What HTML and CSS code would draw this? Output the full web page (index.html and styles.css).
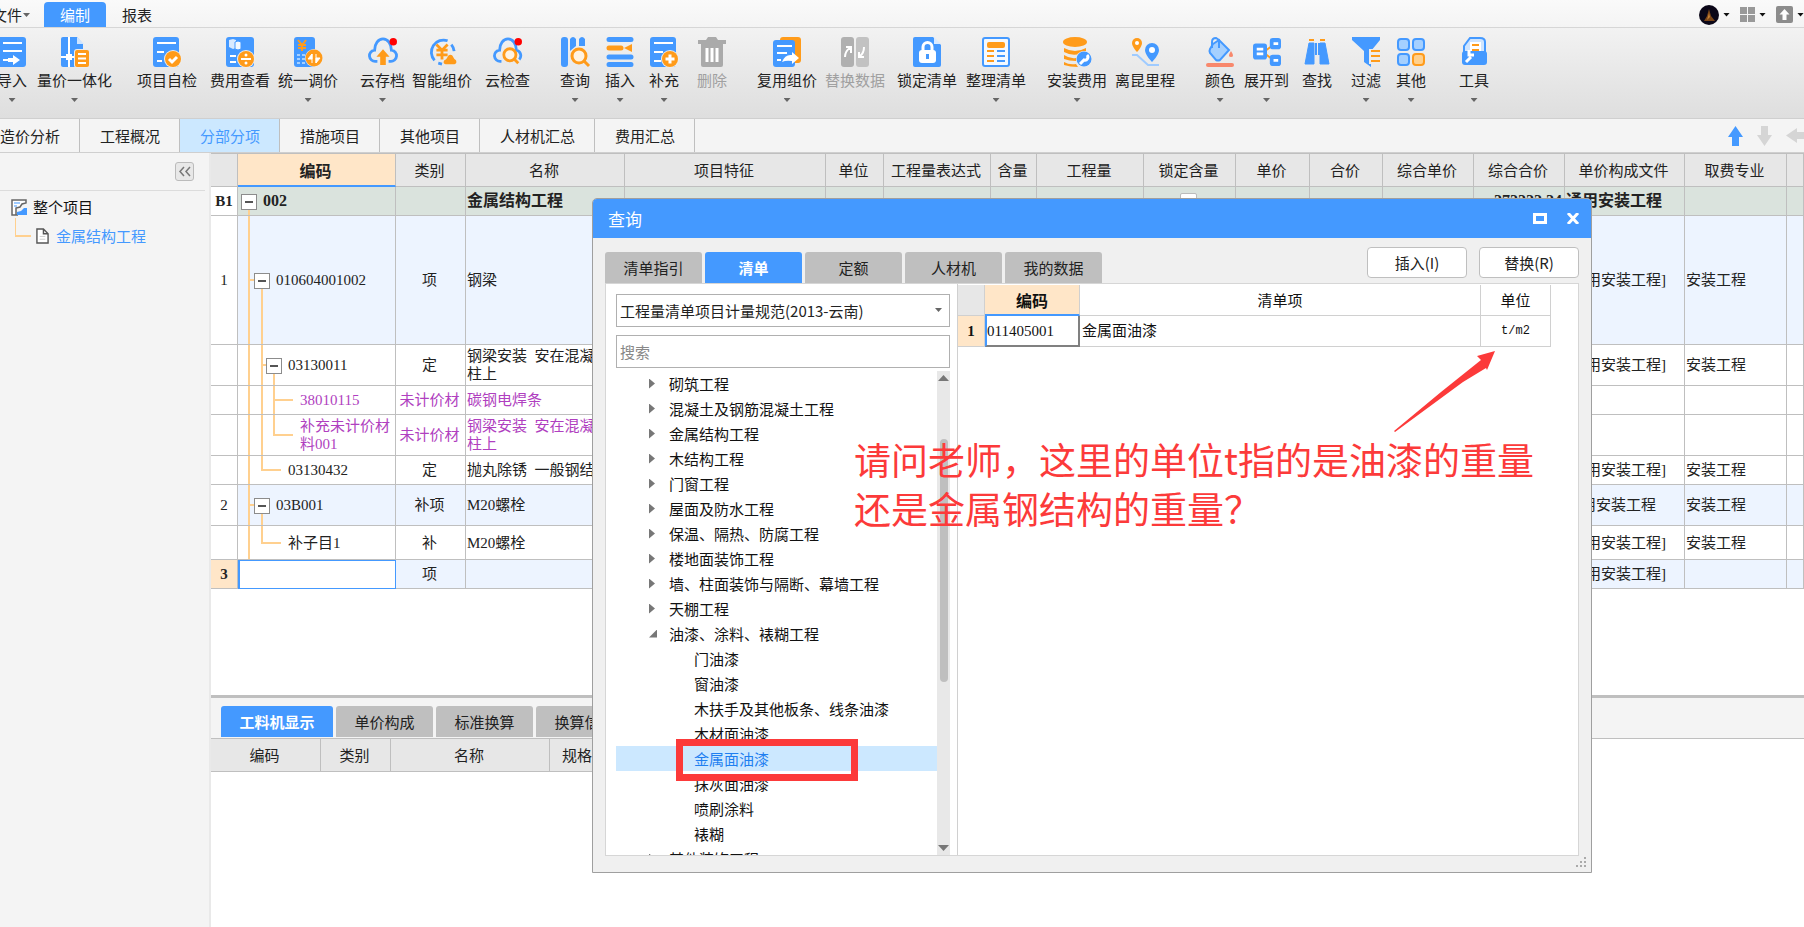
FILE: index.html
```html
<!DOCTYPE html>
<html lang="zh-CN">
<head>
<meta charset="utf-8">
<title>编制 - 分部分项</title>
<link rel="stylesheet" href="styles.css">
</head>
<body>
<div class="app">
  <header class="menubar">
    <button class="menu-file">文件<i class="caret"></i></button>
    <button class="menu-tab active">编制</button>
    <button class="menu-tab">报表</button>
    <div class="window-tools">
      <button aria-label="账户"><svg width="20" height="20" viewBox="0 0 20 20"><circle cx="10" cy="10" r="10" fill="#0b0718"/><path d="M10 4l2 7 4 5H5l3-5z" fill="#7a4518"/><path d="M10 8l1 4-3 3z" fill="#c98235"/></svg><i class="caret dark"></i></button>
      <button aria-label="布局"><svg width="15" height="15" viewBox="0 0 15 15" fill="#999"><path d="M0 0h7v7H0zM8 0h7v7H8zM0 8h7v7H0zM8 8h7v7H8z"/></svg><i class="caret dark"></i></button>
      <button aria-label="上传"><svg width="17" height="17" viewBox="0 0 17 17"><rect width="17" height="17" rx="2" fill="#8c8c8c"/><path d="M8.500 3l5 5.500h-3V14h-4V8.500h-3z" fill="#fff"/></svg><i class="caret dark"></i></button>
    </div>
  </header>

  <nav class="ribbon" aria-label="工具栏">
    <button class="tool"><svg viewBox="0 0 28 30"><rect width="28" height="30" rx="3" class="b"/><path d="M5 6h19M5 14h19M5 23h6" class="wl"/><path d="M10 21h5v-3l7 5-7 5v-3h-5z" class="w"/></svg>导入<i class="caret"></i></button>
    <button class="tool"><svg viewBox="0 0 28 30"><path d="M2 0h14l6 7v23H2a2 2 0 0 1-2-2V2a2 2 0 0 1 2-2z" class="b"/><path d="M16 0l7 7h-7z" fill="#cfe5ff"/><path d="M8 0v30M0 20h15" class="wl"/><rect x="5" y="17" width="6" height="6" class="w"/><rect x="13" y="12" width="16" height="19" rx="3" fill="#ececec"/><rect x="14" y="13" width="14" height="17" rx="2" class="o"/><path d="M17 17h8M17 21.500h8M17 26h8" class="wl"/></svg>量价一体化<i class="caret"></i></button>
    <button class="tool"><svg viewBox="0 0 28 30"><rect width="26" height="30" rx="3" class="b"/><path d="M4 6h19M4 15h7M4 24h5" class="wl"/><circle cx="20" cy="22" r="9" fill="#eee"/><circle cx="20" cy="22" r="8" class="o"/><path d="M16 22l3 3 5-5" class="wl3"/></svg>项目自检</button>
    <button class="tool"><svg viewBox="0 0 28 30"><rect width="28" height="30" rx="3" class="b"/><path d="M3 3l4-1 3 1v8l-3 1-4-2z" fill="#d9eaff"/><path d="M9 5l3-1 3 1v7l-3 1-3-1z" fill="#f2f8ff" stroke="#49f"/><path d="M4 19h6M4 25h6" class="wl"/><circle cx="20" cy="22" r="9" fill="#eee"/><circle cx="20" cy="22" r="8" class="o"/><path d="M15 22h10" class="wl"/><circle cx="20" cy="18" r="1.500" class="w"/><circle cx="20" cy="26" r="1.500" class="w"/></svg>费用查看</button>
    <button class="tool"><svg viewBox="0 0 28 30"><rect width="21" height="30" rx="3" class="b"/><path d="M4 3l4 5 4-5M8 8v6M4 8h8M4 11h8" class="ol"/><path d="M3 18h3M8 18h3M3 22h3M8 22h3M3 26h3M8 26h3" class="ll"/><circle cx="20" cy="21" r="9" fill="#eee"/><circle cx="20" cy="21" r="8.500" class="o"/><path d="M18 17v9M18 17l-4 5h4zM22 26v-9M22 26l4-5h-4z" fill="#fff" stroke="#fff"/></svg>统一调价<i class="caret"></i></button>
    <button class="tool"><svg viewBox="0 0 30 30"><path d="M9 25H7a6 6 0 0 1-1-12C6 6 10 1 15 1s9 5 9 12a6 6 0 0 1-1 12h-2" class="bl3"/><path d="M15 12l7 8h-4v9h-6v-9H8z" class="o"/><circle cx="26" cy="4" r="4" class="r"/></svg>云存档<i class="caret"></i></button>
    <button class="tool"><svg viewBox="0 0 30 30"><path d="M7 24A13 13 0 0 1 21 3M25 7a13 13 0 0 1 3 7M11 27l4 1" class="bl3"/><path d="M9 7l6 6 6-6M15 13v10M9 13h12M9 18h12" class="ol3"/><path d="M24 18c3 0 3 4 5 5 2 1 2 5-1 5h-9c-3 0-3-4 0-5 2-1 2-5 5-5z" class="o"/></svg>智能组价</button>
    <button class="tool"><svg viewBox="0 0 30 30"><path d="M8 25H7a6 6 0 0 1-1-12C6 6 10 1 15 1s9 5 9 12a6 6 0 0 1 3 10" class="bl3"/><circle cx="17" cy="18" r="6.500" fill="#fff3e2" class="ol3"/><path d="M21 22l5 5" class="ol3"/><circle cx="26" cy="4" r="4" class="r"/></svg>云检查</button>
    <button class="tool"><svg viewBox="0 0 28 30"><rect width="7" height="30" rx="3" class="b"/><path d="M9 2q3-4 6 0v7l-6 5zM18 2q3-4 6 0v7h-6z" class="b"/><circle cx="18" cy="19" r="7" fill="#fff3e2" class="ol3"/><path d="M23 24l5 5" class="ol3"/></svg>查询<i class="caret"></i></button>
    <button class="tool"><svg viewBox="0 0 28 30"><path d="M3 2.500h22M3 20h22M3 27.500h22" class="bl5"/><path d="M3 11h12" class="ol5"/><path d="M18 11l8-4v8z" class="o"/></svg>插入<i class="caret"></i></button>
    <button class="tool"><svg viewBox="0 0 28 30"><rect width="26" height="30" rx="3" class="b"/><path d="M4 6h19M4 15h9M4 24h7" class="wl"/><circle cx="20" cy="22" r="9" fill="#eee"/><circle cx="20" cy="22" r="8" class="o"/><path d="M15.500 22h9M20 17.500v9" class="wl3"/></svg>补充<i class="caret"></i></button>
    <button class="tool" disabled><svg viewBox="0 0 28 30" fill="#aaa"><path d="M0 3h8l2-3h8l2 3h8v4H0z"/><path d="M3 7h22v21a2 2 0 0 1-2 2H5a2 2 0 0 1-2-2z"/><path d="M9 11v14M14 11v14M19 11v14" class="wl3"/></svg>删除</button>
    <button class="tool"><svg viewBox="0 0 28 30"><rect x="7" width="21" height="26" rx="3" class="o"/><rect y="3" width="22" height="27" rx="3" class="b"/><path d="M4 9h15M4 16h10M4 23h4" class="wl"/><path d="M9 25q3-8 10-7v-3l7 6-7 6v-3q-6-1-10 1z" class="w"/></svg>复用组价<i class="caret"></i></button>
    <button class="tool" disabled><svg viewBox="0 0 28 30"><rect width="13" height="30" rx="3" fill="#b0b0b0"/><rect x="15" width="13" height="30" rx="3" fill="#c2c2c2"/><path d="M4 20q0-6 5-9M5 10l5 0v6M23 10q0 6-4 9M23 20h-5v-5" class="wl"/></svg>替换数据</button>
    <button class="tool"><svg viewBox="0 0 28 30"><path d="M2 0h18l8 8v20a2 2 0 0 1-2 2H2a2 2 0 0 1-2-2V2a2 2 0 0 1 2-2z" class="b"/><path d="M21 0l7 7h-7z" fill="#d9eaff"/><rect x="6" y="13" width="17" height="13" rx="3" class="w"/><path d="M10 14v-4a4 4 0 0 1 9 0v4" class="wl3"/><path d="M14.500 17v5" class="bl3"/></svg>锁定清单</button>
    <button class="tool"><svg viewBox="0 0 28 30"><rect x="1" y="1" width="26" height="28" rx="2" fill="#f4f9ff" stroke="#49f" stroke-width="2"/><rect x="5" y="5" width="18" height="6" rx="2" class="o"/><path d="M5 14h7M5 19h7M5 24h7" class="ol"/><path d="M15 14h8M15 19h8M15 24h8" class="bl"/></svg>整理清单<i class="caret"></i></button>
    <button class="tool"><svg viewBox="0 0 28 30"><ellipse cx="12" cy="5" rx="12" ry="5" class="o"/><path d="M1 11q11 6 22 0v3q-11 7-22 1zM1 18q6 4 12 3v3q-7 0-12-2zM1 25q5 3 12 2l2 3q-8 0-14-2z" class="o"/><circle cx="21" cy="22" r="8" fill="#eee"/><circle cx="21" cy="22" r="7.500" class="b"/><path d="M17 27l4-4a3 3 0 0 0 3-5" class="wl3"/></svg>安装费用<i class="caret"></i></button>
    <button class="tool"><svg viewBox="0 0 28 30"><path d="M6 1a5 5 0 0 1 5 5c0 4-5 9-5 9S1 10 1 6a5 5 0 0 1 5-5z" class="o"/><circle cx="6" cy="6" r="2" class="w"/><path d="M21 6a7 7 0 0 1 7 7c0 5-7 12-7 12s-7-7-7-12a7 7 0 0 1 7-7z" class="b"/><circle cx="21" cy="13" r="3" class="w"/><path d="M1 18h5l11 10h11" fill="none" stroke="#9fcbff" stroke-width="2"/></svg>离昆里程</button>
    <button class="tool"><svg viewBox="0 0 28 30"><path d="M7 7l6-4 10 10-9 10q-2 1-4 0l-6-7q-1-2 0-4z" fill="#a5d0ff" class="bl"/><path d="M6 11V5q0-4 4-4l3 2v8" fill="none" class="bl"/><path d="M25 14q4 6 0 6t0-6z" fill="#f8886c"/><path d="M2 28h24" stroke="#f8886c" stroke-width="4" stroke-linecap="round"/></svg>颜色<i class="caret"></i></button>
    <button class="tool"><svg viewBox="0 0 30 30"><path d="M13 14l8-6M13 17l8 6" class="ol"/><rect y="6" width="15" height="17" rx="3" class="b"/><rect x="18" width="12" height="12" rx="3" class="b"/><rect x="18" y="18" width="12" height="12" rx="3" class="b"/><path d="M4 12h7M4 17h7M22 6h5M22 24h5" class="wl3"/></svg>展开到<i class="caret"></i></button>
    <button class="tool"><svg viewBox="0 0 28 30"><path d="M6 6h5v21H2zM17 6h5l4 21h-9z" class="b" stroke="#49f"/><path d="M13 6v12M16 6v12" class="bl"/><path d="M6 3h5M17 3h5" class="ol"/></svg>查找</button>
    <button class="tool"><svg viewBox="0 0 28 30"><path d="M0 0h28v3l-9 11v16l-7-5V14L0 3z" class="b"/><rect x="17" y="12" width="11" height="15" fill="#ececec"/><path d="M19 14h9M19 19h9M19 24h9" class="ol"/></svg>过滤<i class="caret"></i></button>
    <button class="tool"><svg viewBox="0 0 28 30"><g fill="#a5d0ff" class="bl"><rect x="1" y="2" width="11" height="11" rx="3"/><rect x="16" y="2" width="11" height="11" rx="3"/><rect x="1" y="17" width="11" height="11" rx="3"/></g><rect x="16" y="17" width="11" height="11" rx="3" fill="#ffd08c" class="ol"/></svg>其他<i class="caret"></i></button>
    <button class="tool"><svg viewBox="0 0 28 30"><path d="M4 15V9l6-8h10q5 0 5 4v10z" fill="#cfe5ff" stroke="#49f" stroke-width="2"/><path d="M10 5h11v11H10z" class="w"/><path d="M12 8h7M12 13h7" class="ol"/><rect x="2" y="14" width="25" height="14" rx="3" class="b"/><path d="M6 25l5-5M9 13v5h5" class="wl3"/></svg>工具<i class="caret"></i></button>
  </nav>

  <nav class="page-tabs">
    <button>造价分析</button><button>工程概况</button><button class="active">分部分项</button><button>措施项目</button><button>其他项目</button><button>人材机汇总</button><button>费用汇总</button>
    <div class="move-tools">
      <button aria-label="上移"><svg width="15" height="20" viewBox="0 0 15 20" fill="#49f"><path d="M7.500 0L15 11h-4v9H4v-9H0z"/></svg></button>
      <button aria-label="下移"><svg width="15" height="20" viewBox="0 0 15 20" fill="#d5d5d5"><path d="M7.500 20L15 9h-4V0H4v9H0z"/></svg></button>
      <button aria-label="左移"><svg width="20" height="15" viewBox="0 0 20 15" fill="#d5d5d5"><path d="M0 7.500L11 0v4h9v7h-9v4z"/></svg></button>
    </div>
  </nav>

  <div class="workspace">
    <aside class="sidebar">
      <div class="side-head"><button class="collapse" aria-label="收起"><svg width="13" height="11" viewBox="0 0 13 11"><path d="M6 1L2 5.500 6 10M12 1L8 5.500l4 4.500" fill="none" stroke="#777" stroke-width="1.500"/></svg></button></div>
      <div class="project-root"><svg width="17" height="17" viewBox="0 0 17 17"><path d="M7 16H1V1h14v3l-4 1-2 3-4 1v7" fill="#fff" stroke="#666" stroke-width="1.500"/><path d="M3 4h6M3 7h3" stroke="#9fcbff" stroke-width="2"/><path d="M6 16v-3l4-1 3-3h3v7z" fill="#49f"/></svg>整个项目</div>
      <div class="project-child"><svg width="16" height="20" viewBox="0 0 16 20"><path d="M0 0v18h16" fill="none" stroke="#ffd08f" stroke-width="2"/></svg><svg width="13" height="16" viewBox="0 0 14 17"><path d="M1 1h7l5 5v10H1zM8 1v5h5" fill="#fff" stroke="#555" stroke-width="1.500"/><path d="M4 9h6M4 12h6" stroke="#ccc"/></svg><a href="#">金属结构工程</a></div>
    </aside>

    <main class="content">
      <section class="grid-area">
        <table class="grid">
          <colgroup><col class="c27"><col class="c158"><col class="c70"><col class="c159"><col class="c201"><col class="c58"><col class="c107"><col class="c46"><col class="c107"><col class="c92"><col class="c74"><col class="c73"><col class="c91"><col class="c91"><col class="c120"><col class="c102"><col></colgroup>
          <thead><tr><th></th><th class="current">编码</th><th>类别</th><th>名称</th><th>项目特征</th><th>单位</th><th>工程量表达式</th><th>含量</th><th>工程量</th><th>锁定含量</th><th>单价</th><th>合价</th><th>综合单价</th><th>综合合价</th><th>单价构成文件</th><th>取费专业</th><th></th></tr></thead>
          <tbody>
            <tr class="section h29"><td class="no">B1</td><td class="code g-root"><button class="toggle" aria-label="折叠"></button>002</td><td></td><td>金属结构工程</td><td></td><td></td><td></td><td></td><td></td><td class="mid"><input type="checkbox" class="lock" aria-label="锁定含量"></td><td></td><td></td><td></td><td class="num">272222.24</td><td>通用安装工程</td><td></td><td></td></tr>
            <tr class="item h129"><td class="no">1</td><td class="code g-item lv1"><button class="toggle" aria-label="折叠"></button>010604001002</td><td class="mid">项</td><td>钢梁</td><td></td><td></td><td></td><td></td><td></td><td></td><td></td><td></td><td></td><td></td><td>[通用安装工程]</td><td>安装工程</td><td></td></tr>
            <tr class="h41"><td class="no"></td><td class="code g-sub lv2"><button class="toggle" aria-label="折叠"></button>03130011</td><td class="mid">定</td><td>钢梁安装&ensp;安在混凝土<br>柱上</td><td></td><td></td><td></td><td></td><td></td><td></td><td></td><td></td><td></td><td></td><td>[通用安装工程]</td><td>安装工程</td><td></td></tr>
            <tr class="material h29"><td class="no"></td><td class="code g-leaf text3">38010115</td><td class="mid">未计价材</td><td>碳钢电焊条</td><td></td><td></td><td></td><td></td><td></td><td></td><td></td><td></td><td></td><td></td><td></td><td></td><td></td></tr>
            <tr class="material h41"><td class="no"></td><td class="code g-leaf-end text3">补充未计价材<br>料001</td><td class="mid">未计价材</td><td>钢梁安装&ensp;安在混凝土<br>柱上</td><td></td><td></td><td></td><td></td><td></td><td></td><td></td><td></td><td></td><td></td><td></td><td></td><td></td></tr>
            <tr class="h29"><td class="no"></td><td class="code g-sub-end text2">03130432</td><td class="mid">定</td><td>抛丸除锈&ensp;一般钢结构</td><td></td><td></td><td></td><td></td><td></td><td></td><td></td><td></td><td></td><td></td><td>[通用安装工程]</td><td>安装工程</td><td></td></tr>
            <tr class="item h41"><td class="no">2</td><td class="code g-item lv1"><button class="toggle" aria-label="折叠"></button>03B001</td><td class="mid">补项</td><td>M20螺栓</td><td></td><td></td><td></td><td></td><td></td><td></td><td></td><td></td><td></td><td></td><td>通用安装工程</td><td>安装工程</td><td></td></tr>
            <tr class="h34"><td class="no"></td><td class="code g-sub-end text2">补子目1</td><td class="mid">补</td><td>M20螺栓</td><td></td><td></td><td></td><td></td><td></td><td></td><td></td><td></td><td></td><td></td><td>[通用安装工程]</td><td>安装工程</td><td></td></tr>
            <tr class="item h29"><td class="no picked">3</td><td class="code editing"></td><td class="mid">项</td><td></td><td></td><td></td><td></td><td></td><td></td><td></td><td></td><td></td><td></td><td></td><td>[通用安装工程]</td><td></td><td></td></tr>
          </tbody>
        </table>
      </section>
      <section class="detail">
        <nav class="sub-tabs"><button class="active">工料机显示</button><button>单价构成</button><button>标准换算</button><button>换算信息</button></nav>
        <table class="grid detail-grid"><thead><tr><th class="c110">编码</th><th class="c70">类别</th><th class="c159">名称</th><th class="c102">规格及型号</th></tr></thead></table>
      </section>
    </main>
  </div>

  <div class="dialog" role="dialog" aria-labelledby="dlg-title">
    <div class="dlg-title"><span id="dlg-title">查询</span>
      <button aria-label="最大化"><svg width="14" height="11" viewBox="0 0 14 11"><rect x="1.500" y="1.500" width="11" height="8" fill="none" stroke="#fff" stroke-width="3"/></svg></button>
      <button aria-label="关闭"><svg width="14" height="11" viewBox="0 0 14 11"><path d="M2 0l10 11M12 0L2 11" stroke="#fff" stroke-width="3"/></svg></button>
    </div>
    <div class="dlg-bar">
      <nav class="sub-tabs"><button>清单指引</button><button class="active">清单</button><button>定额</button><button>人材机</button><button>我的数据</button></nav>
      <div class="actions"><button>插入(I)</button><button>替换(R)</button></div>
    </div>
    <div class="dlg-body">
      <div class="picker">
        <div class="select-wrap"><select aria-label="清单规范"><option>工程量清单项目计量规范(2013-云南)</option></select><i class="caret"></i></div>
        <input class="search" type="text" placeholder="搜索" aria-label="搜索">
        <div class="tree-box">
          <ul class="tree">
            <li>砌筑工程</li><li>混凝土及钢筋混凝土工程</li><li>金属结构工程</li><li>木结构工程</li><li>门窗工程</li><li>屋面及防水工程</li><li>保温、隔热、防腐工程</li><li>楼地面装饰工程</li><li>墙、柱面装饰与隔断、幕墙工程</li><li>天棚工程</li><li class="open">油漆、涂料、裱糊工程</li>
            <li class="leaf">门油漆</li><li class="leaf">窗油漆</li><li class="leaf">木扶手及其他板条、线条油漆</li><li class="leaf">木材面油漆</li><li class="leaf selected">金属面油漆</li><li class="leaf">抹灰面油漆</li><li class="leaf">喷刷涂料</li><li class="leaf">裱糊</li><li>其他装饰工程</li>
          </ul>
          <div class="scrollbar"><i class="up"></i><i class="thumb"></i><i class="down"></i></div>
        </div>
      </div>
      <div class="results">
        <table class="result-grid">
          <colgroup><col class="c27"><col class="c95"><col><col class="c70"></colgroup>
          <thead><tr><th class="corner"></th><th class="current">编码</th><th>清单项</th><th>单位</th></tr></thead>
          <tbody><tr><td class="no picked">1</td><td class="focus">011405001</td><td>金属面油漆</td><td class="mid">t/m2</td></tr></tbody>
        </table>
      </div>
    </div>
    <svg class="grip" width="11" height="11" viewBox="0 0 11 11" fill="#aaa"><path d="M8 0h2v2H8zM4 4h2v2H4zM8 4h2v2H8zM0 8h2v2H0zM4 8h2v2H4zM8 8h2v2H8z"/></svg>
    <div class="mark-box"></div>
    <p class="question">请问老师，这里的单位t指的是油漆的重量<br>还是金属钢结构的重量？</p>
    <svg class="mark-arrow" width="102" height="82" viewBox="0 0 102 82"><path d="M101 0L83 5l4 4-40 32L0 80l1 1 68-50 23-14 1 2z" fill="#fc3a3a"/></svg>
  </div>
</div>
</body>
</html>
```
FILE: styles.css
```css
* { box-sizing: border-box; }
html, body { height: 100%; }
body {
  margin: 0;
  overflow: hidden;
  font: 15px/20px "Noto Sans CJK SC", sans-serif;
  color: #222;
  background: #fff;
}
button {
  border: 0;
  padding: 0;
  background: none;
  font: inherit;
  color: inherit;
  white-space: nowrap;
}
svg { display: block; flex: none; }

.app {
  position: relative;
  height: 100%;
  display: flex;
  flex-direction: column;
  overflow: hidden;
}
.caret {
  display: block;
  width: 7px;
  height: 4px;
  background: #666;
  clip-path: polygon(0 0, 100% 0, 50% 100%);
}
.caret.dark { background: #111; }

/* menu bar */
.menubar {
  flex: none;
  height: 28px;
  display: flex;
  align-items: flex-end;
  background: linear-gradient(#fafafa, #f4f4f4);
  border-bottom: 1px solid #d6d6d6;
}
.menu-file {
  display: flex;
  align-items: center;
  gap: 1px;
  margin-left: -8px;
  height: 24px;
}
.menu-tab { width: 62px; height: 25px; border-radius: 4px 4px 0 0; }
.menu-tab.active { margin-left: 14px; background: #49f; color: #fff; }
.window-tools {
  display: flex;
  gap: 10px;
  height: 25px;
  margin-left: auto;
}
.window-tools button { display: flex; align-items: center; gap: 4px; }

/* ribbon */
.ribbon {
  flex: none;
  height: 91px;
  padding-top: 9px;
  margin-left: -3px;
  display: grid;
  grid-template-columns: 40px 100px 73px 68px 82px 52px 73px 75px 45px 44px 48px 60px 68px 72px 69px 81px 68px 90px 39px 58px 49px 45px 63px 30px;
  justify-items: start;
  align-items: start;
  background: linear-gradient(#f2f2f2, #dedede);
  border-bottom: 1px solid #cfcfcf;
}
.tool { display: flex; flex-direction: column; align-items: center; line-height: 24px; }
.tool svg { width: 28px; height: 30px; margin-bottom: 1px; overflow: visible; }
.tool .caret { margin-top: 6px; }
.tool:disabled { color: #a0a0a0; }
.b { fill: #49f; }
.o { fill: #ff9b1a; }
.w { fill: #fff; }
.r { fill: #f00; }
.wl, .wl3, .ll, .bl3, .bl5, .ol, .ol3, .ol5, .bl { stroke-width: 2; }
.wl, .wl3, .ll, .ol5, .bl5, .bl3, path.ol, path.ol3 { fill: none; }
.wl, .wl3 { stroke: #fff; }
.ll { stroke: #a5d0ff; }
.bl, .bl3, .bl5 { stroke: #49f; }
.ol, .ol3, .ol5 { stroke: #ff9b1a; }
.wl3, .bl3, .ol3 { stroke-width: 3; }
.bl5, .ol5 { stroke-width: 5; stroke-linecap: round; }

/* page tabs */
.page-tabs {
  flex: none;
  height: 34px;
  display: flex;
  margin-left: -20px;
  background: #f4f4f4;
  border-bottom: 1px solid #cfcfcf;
}
.page-tabs > button { padding: 0 19px 0 20px; border-right: 1px solid #bfbfbf; }
.page-tabs > .active { background: #cce8ff; color: #49f; }
.move-tools { margin: 0 -2px 0 auto; display: flex; align-items: center; gap: 14px; }

.workspace { flex: 1; min-height: 0; display: flex; }

/* project tree */
.sidebar {
  flex: none;
  width: 211px;
  background: #f4f4f4;
  border-right: 2px solid #e9e9e9;
}
.side-head {
  height: 38px;
  display: flex;
  align-items: center;
  justify-content: flex-end;
  padding-right: 11px;
  margin-right: 4px;
  border-bottom: 1px solid #dcdcdc;
}
.collapse {
  width: 19px;
  height: 19px;
  display: grid;
  place-items: center;
  border: 1px solid #bbb;
  border-radius: 3px;
  background: #e8e8e8;
}
.project-root, .project-child { display: flex; align-items: center; }
.project-root { gap: 5px; padding: 6px 0 0 11px; color: #111; }
.project-child { gap: 5px; padding: 9px 0 0 15px; }
.project-child svg:first-child { margin-top: -16px; }
.project-child a { margin-left: 2px; color: #49f; text-decoration: none; }

/* main grid */
.content { flex: 1; min-width: 0; display: flex; flex-direction: column; }
.grid-area { flex: 1; min-height: 0; overflow: hidden; border-bottom: 3px solid #bfbfbf; }
.grid {
  width: 100%;
  table-layout: fixed;
  border-collapse: separate;
  border-spacing: 0;
  border-top: 1px solid #bfbfbf;
  line-height: 18px;
}
.grid th {
  height: 33px;
  padding: 0 2px 0 0;
  background: #e7e7e7;
  font-weight: 400;
  white-space: nowrap;
}
.grid th, .grid td {
  border-right: 1px solid #bfbfbf;
  border-bottom: 1px solid #bfbfbf;
}
.grid td {
  padding: 0 2px 0 1px;
  font-family: "Liberation Serif", "Noto Sans CJK SC", serif;
  white-space: nowrap;
  overflow: hidden;
}
.grid th.current, .result-grid th.current {
  background: #ffe6c8;
  border-bottom: 2px solid #49f;
  font-weight: 700;
  font-size: 16px;
}
.c27 { width: 27px; } .c46 { width: 46px; } .c58 { width: 58px; } .c70 { width: 70px; }
.c73 { width: 73px; } .c74 { width: 74px; } .c91 { width: 91px; }
.c92 { width: 92px; } .c95 { width: 95px; } .c102 { width: 102px; } .c107 { width: 107px; }
.c110 { width: 110px; } .c120 { width: 120px; } .c158 { width: 158px; } .c159 { width: 159px; }
.c201 { width: 201px; }
.h29 td { height: 29px; } .h34 td { height: 34px; } .h41 td { height: 41px; } .h129 td { height: 129px; }
.section td { background-color: #dae3dd; font-weight: 700; font-size: 16px; }
.item td { background-color: #edf4ff; }
.material td { color: #b03fc0; }
.grid .no, .result-grid .no { padding: 0; text-align: center; font-size: 15px; background-color: #fff; }
.grid .picked, .result-grid .picked { background-color: #ffe6c8; font-weight: 700; }
.grid .mid { padding: 0 2px 0 0; text-align: center; }
.num { text-align: right; }
.grid .editing { background: #fff; border: 1px solid #49f; border-left-width: 2px; }
.lock {
  appearance: none;
  width: 17px;
  height: 17px;
  margin: 0;
  vertical-align: middle;
  background: #fff;
  border: 1px solid #bbb;
  border-radius: 2px;
}
.toggle {
  width: 16px;
  height: 16px;
  margin-right: 6px;
  vertical-align: middle;
  border: 1px solid #8c8c8c;
  background: linear-gradient(#555, #555) center / 8px 2px no-repeat #fff;
}

/* tree guides inside the code column */
.grid .code { --line: linear-gradient(#ffd08f, #ffd08f); padding-left: 3px; background-repeat: no-repeat; }
.grid .lv1 { padding-left: 16px; }
.grid .lv2 { padding-left: 28px; }
.grid .text2 { padding-left: 50px; }
.grid .text3 { padding-left: 62px; }
.g-root { background-image: var(--line); background-size: 2px 50%; background-position: 10px 100%; }
.g-item {
  background-image: var(--line), var(--line), var(--line);
  background-size: 2px 100%, 6px 2px, 2px 50%;
  background-position: 10px 0, 10px 50%, 23px 100%;
}
.g-sub {
  background-image: var(--line), var(--line), var(--line), var(--line);
  background-size: 2px 100%, 2px 100%, 6px 2px, 2px 50%;
  background-position: 10px 0, 23px 0, 23px 50%, 35px 100%;
}
.g-leaf, .g-leaf-end {
  background-image: var(--line), var(--line), var(--line), var(--line);
  background-size: 2px 100%, 2px 100%, 2px 100%, 20px 2px;
  background-position: 10px 0, 23px 0, 35px 0, 35px 50%;
}
.g-leaf-end { background-size: 2px 100%, 2px 100%, 2px 50%, 20px 2px; }
.g-sub-end {
  background-image: var(--line), var(--line), var(--line);
  background-size: 2px 100%, 2px 50%, 20px 2px;
  background-position: 10px 0, 23px 0, 23px 50%;
}

/* detail panel */
.detail { flex: none; height: 229px; }
.sub-tabs { display: flex; align-items: flex-end; gap: 3px; }
.sub-tabs button {
  width: 97px;
  height: 31px;
  border-radius: 3px 3px 0 0;
  background: #bfbfbf;
}
.sub-tabs .active { background: #49f; color: #fff; font-weight: 700; }
.detail .sub-tabs { height: 41px; padding: 0 0 1px 10px; background: #f4f4f4; border-bottom: 1px solid #bfbfbf; }
.detail .sub-tabs .active { width: 112px; }
.detail-grid { width: 441px; border-top: 0; }

/* query dialog */
.dialog {
  position: absolute;
  left: 592px;
  top: 198px;
  right: 212px;
  bottom: 54px;
  display: flex;
  flex-direction: column;
  border: 1px solid #9f9f9f;
  border-radius: 5px 5px 0 0;
  background: #f0f0f0;
  overflow: hidden;
}
.dlg-title {
  flex: none;
  height: 39px;
  display: flex;
  align-items: center;
  gap: 19px;
  padding: 0 11px 0 15px;
  background: #49f;
  color: #fff;
  font-size: 17px;
}
.dlg-title span { margin-right: auto; }
.dlg-bar { flex: none; height: 45px; display: flex; justify-content: space-between; padding: 0 12px; }
.actions { display: flex; gap: 12px; padding-top: 9px; }
.actions button { width: 100px; height: 31px; border: 1px solid #bfbfbf; border-radius: 4px; background: #fff; }
.dlg-body {
  flex: 1;
  min-height: 0;
  display: flex;
  margin: 0 12px 16px;
  border: 1px solid #d6d6d6;
  background: #fff;
}
.picker {
  flex: none;
  width: 352px;
  display: flex;
  flex-direction: column;
  padding: 10px 7px 0 10px;
  border-right: 1px solid #d0d0d0;
}
.select-wrap { position: relative; flex: none; margin-bottom: 8px; }
.select-wrap .caret { position: absolute; right: 8px; top: 14px; }
select, .search {
  display: block;
  flex: none;
  width: 100%;
  height: 33px;
  padding: 0 3px;
  border: 1px solid #b0b0b0;
  border-radius: 0;
  background: #fff;
  font: inherit;
  color: #222;
  appearance: none;
}
.search { margin-bottom: 3px; }
.search::placeholder { color: #888; }
.tree-box { flex: 1; min-height: 0; display: flex; overflow: hidden; }
.tree { flex: 1; margin: 0; padding: 0; list-style: none; color: #111; }
.tree li { display: flex; align-items: center; height: 25px; padding-left: 33px; }
.tree li::before {
  content: "";
  width: 6px;
  height: 10px;
  margin-right: 14px;
  background: #777;
  clip-path: polygon(0 0, 100% 50%, 0 100%);
}
.tree .open::before { width: 8px; height: 8px; margin-right: 12px; clip-path: polygon(100% 0, 100% 100%, 0 100%); }
.tree .leaf { padding-left: 78px; }
.tree .leaf::before { display: none; }
.tree .selected { background: #cce8ff; color: #1f7ff0; }
.scrollbar { width: 13px; display: flex; flex-direction: column; align-items: center; padding: 4px 0; background: #e8e8e8; }
.up, .down { width: 11px; height: 6px; background: #777; }
.up { clip-path: polygon(50% 0, 100% 100%, 0 100%); }
.down { clip-path: polygon(0 0, 100% 0, 50% 100%); }
.thumb { width: 8px; height: 51%; margin: 58px 0 auto; border-radius: 4px; background: #bfbfbf; }

.results { flex: 1; padding: 1px 27px 0 0; }
.result-grid { width: 100%; table-layout: fixed; border-collapse: separate; border-spacing: 0; color: #111; }
.result-grid th, .result-grid td { border-right: 1px solid #d0d0d0; border-bottom: 1px solid #d0d0d0; padding: 0 2px; }
.result-grid th { height: 31px; font-weight: 400; }
.result-grid td { height: 31px; font-family: "Liberation Serif", "Noto Sans CJK SC", serif; }
.result-grid .corner { background: #e7e7e7; }
.result-grid .focus { padding: 0; border: 2px solid #808080; border-top: 0; border-left-color: #49f; }
.result-grid .mid { text-align: center; font-family: "Liberation Mono", monospace; font-size: 12px; }
.grip { position: absolute; right: 4px; bottom: 4px; }

/* annotations laid over the dialog */
.mark-box { position: absolute; left: 83px; top: 540px; width: 182px; height: 42px; border: 7px solid #fc3a3a; }
.question {
  position: absolute;
  left: 261px;
  top: 236px;
  margin: 0;
  font-size: 37px;
  line-height: 49px;
  color: #fc3a3a;
  white-space: nowrap;
}
.mark-arrow { position: absolute; right: 95px; top: 152px; }
```
